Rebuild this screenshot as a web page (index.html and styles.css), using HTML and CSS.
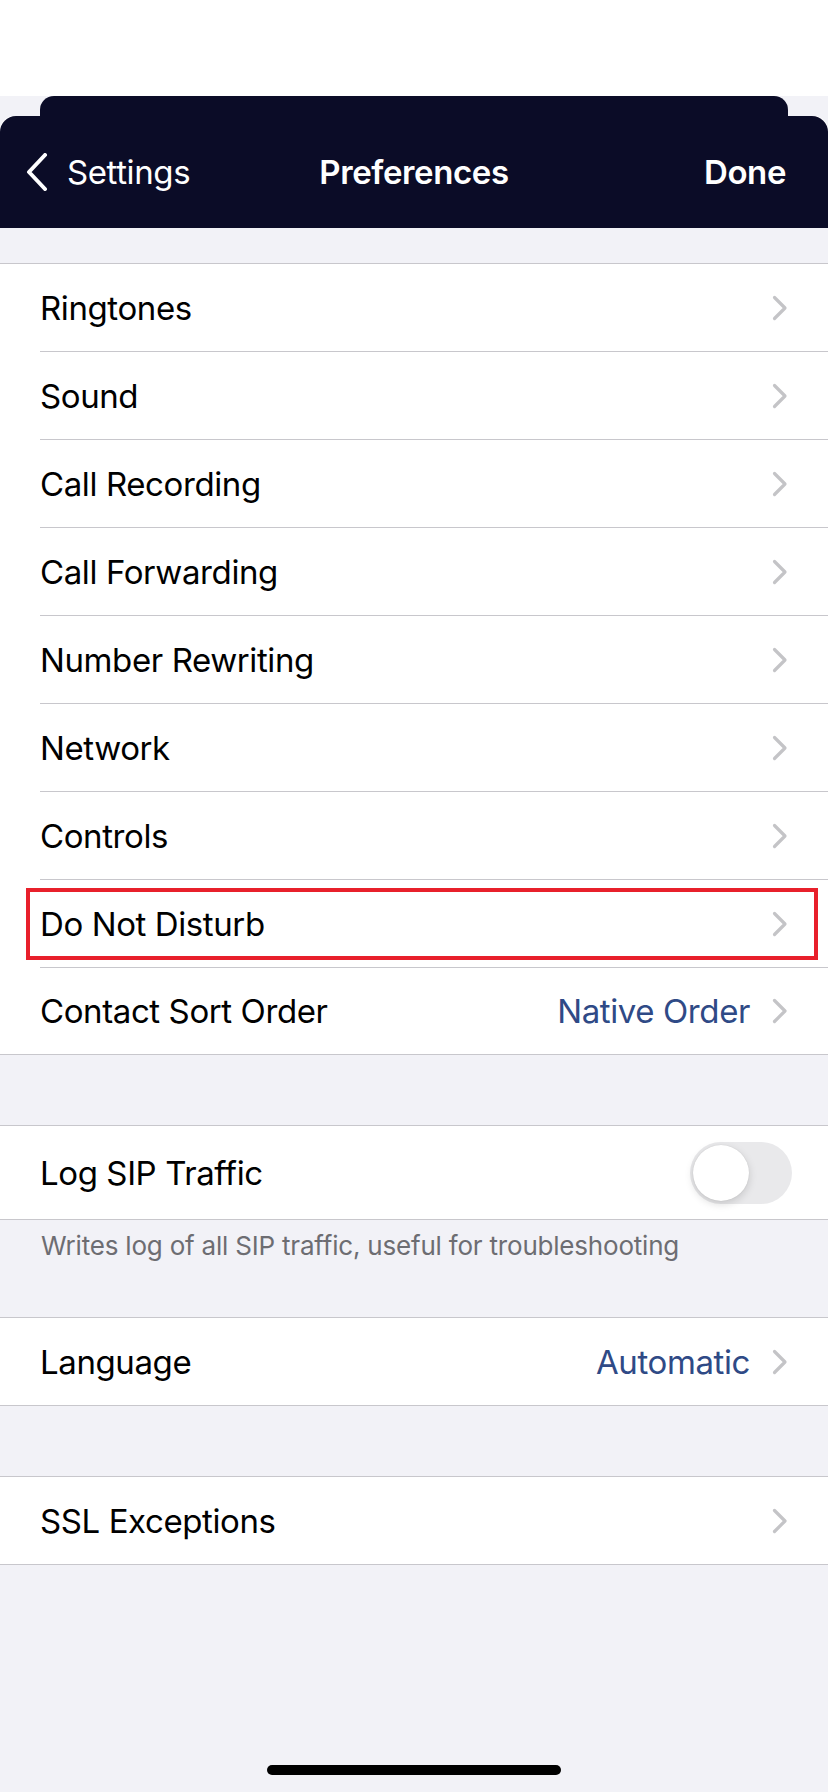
FILE: index.html
```html
<!DOCTYPE html>
<html lang="en">
<head>
  <meta charset="UTF-8">
  <title>Preferences</title>
  <meta name="viewport" content="width=device-width, initial-scale=1.0">
  <link rel="stylesheet" href="styles.css">
</head>
<body>
  <div class="status-area"></div>

  <div class="sheet-back"></div>
  <header class="navbar">
    <div class="nav-left">
      <svg class="back-icon" width="22" height="38" viewBox="0 0 22 38">
        <polyline points="19,2 3,19 19,36" fill="none" stroke="#fff" stroke-width="4" stroke-linecap="round" stroke-linejoin="round"/>
      </svg>
      <span>Settings</span>
    </div>
    <div class="nav-title">Preferences</div>
    <div class="nav-right">Done</div>
  </header>

  <section class="group group-first">
    <div class="row"><span class="label">Ringtones</span><span class="chev"></span></div>
    <div class="row"><span class="label">Sound</span><span class="chev"></span></div>
    <div class="row"><span class="label">Call Recording</span><span class="chev"></span></div>
    <div class="row"><span class="label">Call Forwarding</span><span class="chev"></span></div>
    <div class="row"><span class="label">Number Rewriting</span><span class="chev"></span></div>
    <div class="row"><span class="label">Network</span><span class="chev"></span></div>
    <div class="row"><span class="label">Controls</span><span class="chev"></span></div>
    <div class="row highlighted"><span class="label">Do Not Disturb</span><span class="chev"></span></div>
    <div class="row"><span class="label">Contact Sort Order</span><span class="value">Native Order</span><span class="chev"></span></div>
  </section>

  <section class="group">
    <div class="row row-switch">
      <span class="label">Log SIP Traffic</span>
      <span class="switch"><span class="knob"></span></span>
    </div>
  </section>
  <p class="group-footer">Writes log of all SIP traffic, useful for troubleshooting</p>

  <section class="group">
    <div class="row"><span class="label">Language</span><span class="value">Automatic</span><span class="chev"></span></div>
  </section>

  <section class="group group-last">
    <div class="row"><span class="label">SSL Exceptions</span><span class="chev"></span></div>
  </section>

  <div class="home-bar"></div>

  <script>
    // chevrons are the same everywhere, so drop them in once
    document.querySelectorAll('.chev').forEach(function (el) {
      el.innerHTML = '<svg width="16" height="26" viewBox="0 0 16 26"><polyline points="2.5,2.5 13,13 2.5,23.5" fill="none" stroke="#c4c4c7" stroke-width="3.2" stroke-linecap="round" stroke-linejoin="round"/></svg>';
    });
  </script>
</body>
</html>
```

FILE: styles.css
```css
:root {
  --bg: #f2f2f7;
  --navy: #0b0c27;
  --line: #c8c7cc;
  --text: #000000;
  --value: #2f4a86;
  --muted: #6d6d72;
}

* {
  box-sizing: border-box;
}

body {
  margin: 0;
  background: var(--bg);
  font-family: 'Inter', 'Noto Sans', sans-serif;
  color: var(--text);
  min-height: 1792px;
}

.status-area {
  height: 96px;
  background: #ffffff;
}

/* the card behind the nav bar, peeking out on top */
.sheet-back {
  height: 20px;
  margin: 0 40px;
  background: var(--navy);
  border-radius: 14px 14px 0 0;
  /* white fill behind the rounded corners of the front bar */
  box-shadow: -40px 20px 0 0 #ffffff, 40px 20px 0 0 #ffffff;
}

.navbar {
  position: relative;
  height: 112px;
  background: var(--navy);
  border-radius: 16px 16px 0 0;
  color: #ffffff;
  display: flex;
  align-items: center;
  justify-content: space-between;
  padding: 0 42px 0 26px;
}

.nav-left {
  display: flex;
  align-items: center;
  gap: 19px;
  font-size: 33px;
  letter-spacing: -0.4px;
}

.back-icon {
  display: block;
}

.nav-title {
  position: absolute;
  left: 0;
  right: 0;
  text-align: center;
  font-size: 33px;
  font-weight: 600;
  letter-spacing: -0.4px;
  pointer-events: none;
}

.nav-right {
  font-size: 33px;
  font-weight: 600;
  letter-spacing: -0.4px;
}

.group {
  background: #ffffff;
  border-top: 1px solid var(--line);
  border-bottom: 1px solid var(--line);
  margin-top: 70px;
}

.group-first {
  margin-top: 35px;
}

.row {
  position: relative;
  display: flex;
  align-items: center;
  height: 88px;
  margin-left: 40px;
  padding-right: 40px;
  border-bottom: 1px solid var(--line);
  font-size: 33px;
  letter-spacing: -0.4px;
}

.row:last-child {
  border-bottom: none;
  height: 87px;
}

.group-first .row:last-child {
  height: 86px;
}

.row .label {
  flex: 1;
}

.row .value {
  color: var(--value);
  margin-right: 22px;
}

.chev svg {
  display: block;
}

.row-switch {
  height: 93px !important;
  padding-right: 36px;
}

.switch {
  position: relative;
  width: 102px;
  height: 62px;
  border-radius: 31px;
  background: #e9e9eb;
}

.knob {
  position: absolute;
  top: 3px;
  left: 3px;
  width: 56px;
  height: 56px;
  border-radius: 50%;
  background: #ffffff;
  box-shadow: 0 3px 8px rgba(0, 0, 0, 0.15), 0 0 1px rgba(0, 0, 0, 0.16);
}

/* red annotation box around Do Not Disturb */
.highlighted::after {
  content: '';
  position: absolute;
  top: 8px;
  bottom: 7px;
  left: -14px;
  right: 10px;
  border: 4px solid #e8202b;
}

.group-footer {
  margin: 0;
  padding: 11px 41px 0;
  font-size: 26px;
  line-height: 30px;
  color: var(--muted);
  letter-spacing: -0.2px;
}

.group-footer + .group {
  margin-top: 56px;
}

.group-last {
  margin-top: 70px;
}

.home-bar {
  width: 294px;
  height: 10px;
  border-radius: 5px;
  background: #000000;
  margin: 200px auto 0;
}
```
